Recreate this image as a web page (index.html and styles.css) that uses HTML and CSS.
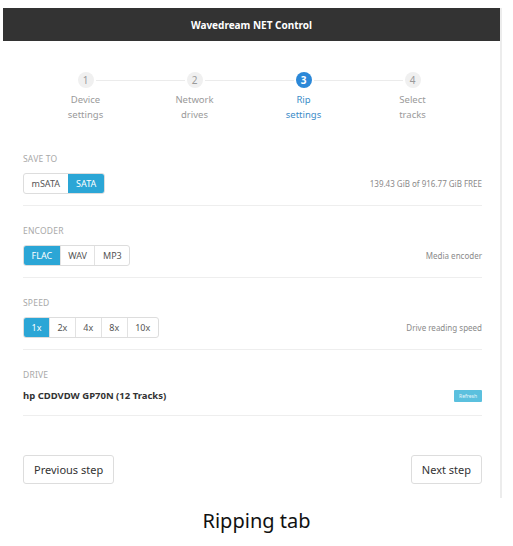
FILE: index.html
```html
<!DOCTYPE html>
<html>
<head>
<meta charset="utf-8">
<link rel="stylesheet" href="styles.css">
</head>
<body>
<div class="frame">
  <header class="topbar">Wavedream NET Control</header>
  <div class="content">
    <div class="steps">
      <div class="step done"><span class="circle">1</span><span class="label">Device<br>settings</span></div>
      <div class="step done"><span class="circle">2</span><span class="label">Network<br>drives</span></div>
      <div class="step active"><span class="circle">3</span><span class="label">Rip<br>settings</span></div>
      <div class="step last"><span class="circle">4</span><span class="label">Select<br>tracks</span></div>
    </div>

    <section class="group">
      <div class="group-label">SAVE TO</div>
      <div class="group-row">
        <div class="btn-group">
          <span class="seg">mSATA</span><span class="seg on">SATA</span>
        </div>
        <span class="hint">139.43 GiB of 916.77 GiB FREE</span>
      </div>
    </section>

    <section class="group">
      <div class="group-label">ENCODER</div>
      <div class="group-row">
        <div class="btn-group">
          <span class="seg on">FLAC</span><span class="seg">WAV</span><span class="seg">MP3</span>
        </div>
        <span class="hint">Media encoder</span>
      </div>
    </section>

    <section class="group">
      <div class="group-label">SPEED</div>
      <div class="group-row">
        <div class="btn-group">
          <span class="seg on">1x</span><span class="seg">2x</span><span class="seg">4x</span><span class="seg">8x</span><span class="seg">10x</span>
        </div>
        <span class="hint">Drive reading speed</span>
      </div>
    </section>

    <section class="group drive">
      <div class="group-label">DRIVE</div>
      <div class="group-row">
        <span class="drive-name">hp CDDVDW GP70N (12 Tracks)</span>
        <span class="refresh">Refresh</span>
      </div>
    </section>

    <div class="nav">
      <button class="nav-btn">Previous step</button>
      <button class="nav-btn">Next step</button>
    </div>
  </div>
</div>
<p class="caption">Ripping tab</p>
</body>
</html>
```

FILE: styles.css
```css
html, body {
  margin: 0;
  padding: 0;
  background: #ffffff;
}

body {
  font-family: "Noto Sans", "Open Sans", sans-serif;
  color: #333;
}

.frame {
  margin: 8px 0 0 3px;
  width: 499px;
  height: 490px;
  border-right: 2px solid #ececec;
  box-sizing: border-box;
  background: #fff;
}

.topbar {
  height: 33px;
  background: #333333;
  color: #fff;
  font-weight: 700;
  font-size: 10px;
  display: flex;
  align-items: center;
  justify-content: center;
}

.content {
  padding: 0 18px 0 20px;
}

/* steps */
.steps {
  display: grid;
  grid-template-columns: repeat(4, 109px);
  margin-left: 8px;
  padding-top: 31px;
  padding-bottom: 12px;
}

.step {
  position: relative;
  display: flex;
  flex-direction: column;
  align-items: center;
}

.step::after {
  content: "";
  position: absolute;
  top: 8px;
  left: calc(50% + 10px);
  width: 89px;
  height: 1px;
  background: #ebebeb;
}

.step.last::after {
  display: none;
}

.circle {
  width: 16px;
  height: 16px;
  border-radius: 50%;
  background: #f0f0f0;
  color: #9a9a9a;
  font-size: 10px;
  line-height: 16px;
  text-align: center;
}

.label {
  margin-top: 4px;
  font-size: 9.5px;
  line-height: 15px;
  color: #9a9a9a;
  text-align: center;
}

.step.active .circle {
  background: #2b88d8;
  color: #fff;
  font-weight: 700;
}

.step.active .label {
  color: #3b8cc8;
}

/* groups */
.group {
  padding: 19px 0 11px;
  border-bottom: 1px solid #eeeeee;
}

.group-label {
  font-size: 8.5px;
  line-height: 12px;
  color: #a8a8a8;
  letter-spacing: 0.2px;
  margin-bottom: 8px;
}

.group-row {
  display: flex;
  align-items: center;
  justify-content: space-between;
}

.btn-group {
  display: flex;
  height: 21px;
  border: 1px solid #dddddd;
  border-radius: 3px;
  box-sizing: border-box;
  overflow: hidden;
}

.seg {
  display: flex;
  align-items: center;
  padding: 0 7.5px;
  font-size: 9px;
  color: #555;
  border-left: 1px solid #e2e2e2;
}

.seg:first-child {
  border-left: none;
}

.seg.on {
  background: #2ba6d6;
  color: #fff;
  border-left-color: #2ba6d6;
}

.hint {
  font-size: 8px;
  color: #8a8a8a;
}

.drive {
  padding-bottom: 12px;
}

.drive-name {
  font-size: 9.5px;
  line-height: 14px;
  font-weight: 700;
  color: #333;
}

.refresh {
  background: #5bc0de;
  color: #e8f7fc;
  font-size: 5px;
  padding: 0 5px;
  height: 12px;
  line-height: 12px;
  border-radius: 1px;
}

/* nav */
.nav {
  display: flex;
  justify-content: space-between;
  margin-top: 39px;
}

.nav-btn {
  height: 29px;
  padding: 0 10px;
  background: #fff;
  border: 1px solid #dddddd;
  border-radius: 3px;
  font-family: "Noto Sans", "Open Sans", sans-serif;
  font-size: 11px;
  color: #333;
}

.caption {
  margin: 9px 0 0;
  text-align: center;
  font-family: "Noto Sans", "Open Sans", sans-serif;
  font-size: 20px;
  color: #111;
}
```
